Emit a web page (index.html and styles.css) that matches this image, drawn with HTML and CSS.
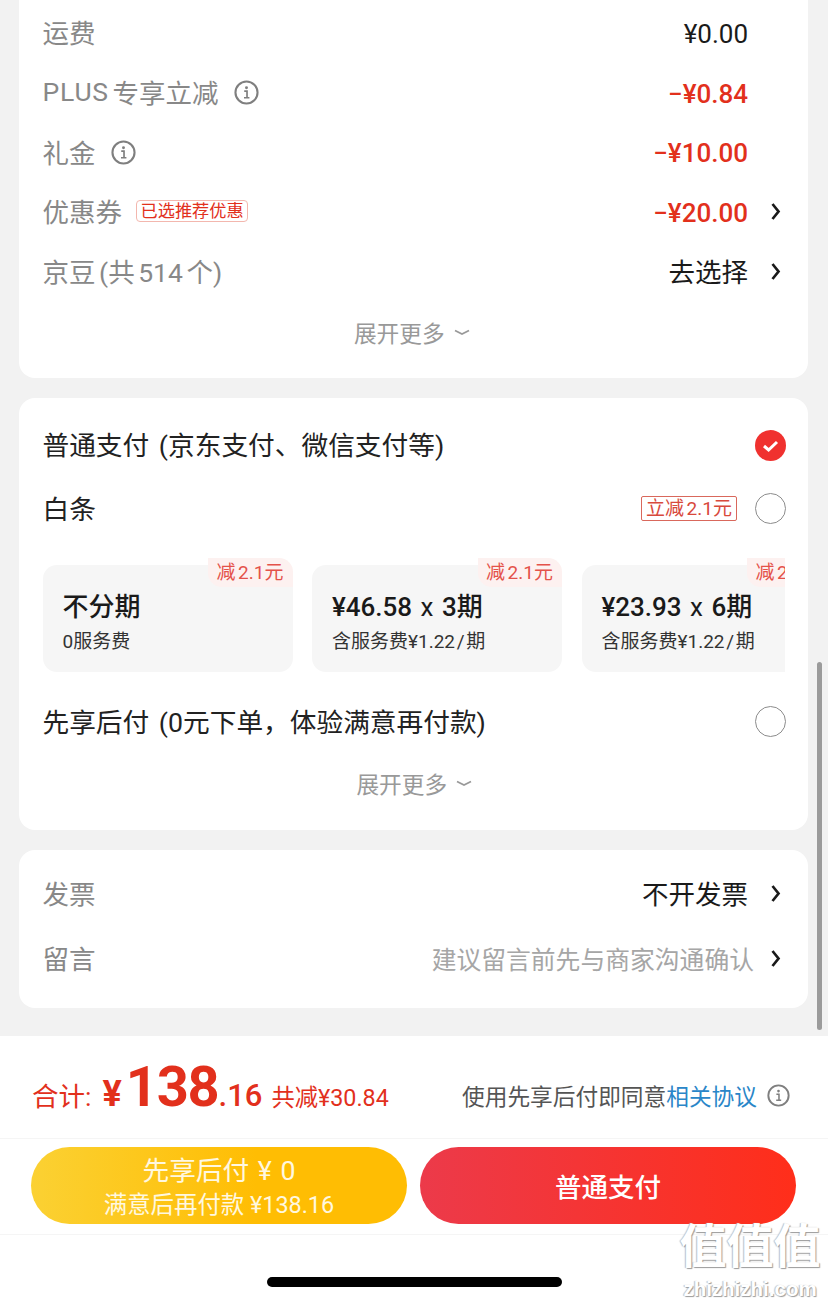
FILE: index.html
```html
<!DOCTYPE html>
<html>
    <head>
        <title>确认订单</title>
        <meta charset="UTF-8"/>
        <meta name="viewport" content="width=device-width, initial-scale=1.0"/>
        <link rel="stylesheet" href="styles.css">
    </head>
    <body>
        <svg class="defs" width="0" height="0">
            <symbol id="info" viewBox="0 0 24 24">
                <circle cx="12" cy="12" r="10.6" fill="none" stroke="currentColor" stroke-width="2"/>
                <circle cx="12" cy="7.4" r="1.4" fill="currentColor"/>
                <path d="M9.8 10.6h2.7v6.2M9.6 17h5.2" fill="none" stroke="currentColor" stroke-width="1.6"/>
            </symbol>
            <symbol id="arrow" viewBox="0 0 11 19">
                <path d="M2.5 2l6 7.5-6 7.5" fill="none" stroke="currentColor" stroke-width="2.7"/>
            </symbol>
            <symbol id="fold" viewBox="0 0 16 7">
                <path d="M1 1.5l7 3.5 7-3.5" fill="none" stroke="currentColor" stroke-width="1.8"/>
            </symbol>
        </svg>

        <div class="page">
            <!-- 金额明细 -->
            <section class="card card-price">
                <div class="row">
                    <div class="label">运费</div>
                    <div class="value num">¥0.00</div>
                    <span class="arrow-slot"></span>
                </div>
                <div class="row">
                    <div class="label"><span class="latin">PLUS</span> 专享立减<svg class="info"><use href="#info"/></svg></div>
                    <div class="value num red">−¥0.84</div>
                    <span class="arrow-slot"></span>
                </div>
                <div class="row">
                    <div class="label">礼金<svg class="info"><use href="#info"/></svg></div>
                    <div class="value num red">−¥10.00</div>
                    <span class="arrow-slot"></span>
                </div>
                <div class="row">
                    <div class="label">优惠券<span class="coupon-tag">已选推荐优惠</span></div>
                    <div class="value num red">−¥20.00</div>
                    <span class="arrow-slot"><svg class="arrow"><use href="#arrow"/></svg></span>
                </div>
                <div class="row">
                    <div class="label">京豆 (共 514 个)</div>
                    <div class="value">去选择</div>
                    <span class="arrow-slot"><svg class="arrow"><use href="#arrow"/></svg></span>
                </div>
                <div class="more">展开更多<svg class="fold"><use href="#fold"/></svg></div>
            </section>

            <!-- 支付方式 -->
            <section class="card card-pay">
                <div class="pay-row">
                    <div class="pay-name">普通支付 (京东支付、微信支付等)</div>
                    <svg class="check" viewBox="0 0 31 31">
                        <circle cx="15.5" cy="15.5" r="15.5" fill="#f0312f"/>
                        <path d="M9 16l4.6 4 8.4-8" fill="none" stroke="#fff" stroke-width="3"/>
                    </svg>
                </div>
                <div class="pay-row baitiao">
                    <div class="pay-name">白条</div>
                    <span class="cut-tag">立减 2.1元</span>
                    <span class="radio"></span>
                </div>
                <div class="plans">
                    <div class="plan">
                        <span class="plan-badge">减 2.1元</span>
                        <div class="plan-title">不分期</div>
                        <div class="plan-sub">0服务费</div>
                    </div>
                    <div class="plan">
                        <span class="plan-badge">减 2.1元</span>
                        <div class="plan-title">¥46.58 <i>x</i> 3期</div>
                        <div class="plan-sub">含服务费¥1.22 / 期</div>
                    </div>
                    <div class="plan">
                        <span class="plan-badge">减 2.1元</span>
                        <div class="plan-title">¥23.93 <i>x</i> 6期</div>
                        <div class="plan-sub">含服务费¥1.22 / 期</div>
                    </div>
                </div>
                <div class="pay-row later">
                    <div class="pay-name">先享后付 (0元下单，体验满意再付款)</div>
                    <span class="radio"></span>
                </div>
                <div class="more">展开更多<svg class="fold"><use href="#fold"/></svg></div>
            </section>

            <!-- 发票和留言 -->
            <section class="card card-extra">
                <div class="row">
                    <div class="label">发票</div>
                    <div class="value">不开发票</div>
                    <span class="arrow-slot"><svg class="arrow"><use href="#arrow"/></svg></span>
                </div>
                <div class="row">
                    <div class="label">留言</div>
                    <div class="value hint">建议留言前先与商家沟通确认</div>
                    <span class="arrow-slot short"><svg class="arrow"><use href="#arrow"/></svg></span>
                </div>
            </section>

            <!-- 底部结算 -->
            <footer class="bar">
                <div class="sum">
                    <div class="total">
                        <span class="total-label">合计:</span>
                        <span class="yen">¥</span><span class="big">138</span><span class="cents">.16</span>
                        <span class="saved">共减¥30.84</span>
                    </div>
                    <div class="agree">使用先享后付即同意<a class="link">相关协议</a><svg class="info"><use href="#info"/></svg></div>
                </div>
                <div class="buttons">
                    <button class="btn btn-later">
                        <span class="btn-top">先享后付 ¥ 0</span>
                        <span class="btn-bottom">满意后再付款 ¥138.16</span>
                    </button>
                    <button class="btn btn-pay">普通支付</button>
                </div>
                <div class="home-area"><span class="home"></span></div>
            </footer>
        </div>

        <div class="scrollbar"></div>
        <div class="mark">
            <div class="mark-big">值值值</div>
            <div class="mark-small">zhizhizhi.com</div>
        </div>
    </body>
</html>
```

FILE: styles.css
```css
html, body {
    margin: 0;
    padding: 0;
}

body {
    position: relative;
    height: 1303px;
    overflow: hidden;
    background: #f2f2f2;
    font-family: Roboto, "Noto Sans CJK SC", sans-serif;
    color: #1a1a1a;
}

.defs {
    position: absolute;
}

.page {
    display: flex;
    flex-direction: column;
    height: 1303px;
}

.card {
    flex: none;
    margin: 0 20px 20px 19px;
    background: #fff;
    border-radius: 16px;
}

.card-price {
    height: 378px;
    padding: 3px 27px 0 23.5px;
    box-sizing: border-box;
    border-radius: 0 0 16px 16px;
}

.card-pay {
    height: 432px;
    padding: 15px 22px 0 23.5px;
    box-sizing: border-box;
}

.card-extra {
    height: 158px;
    padding: 11px 27px 0 23.5px;
    box-sizing: border-box;
    margin-bottom: 28px;
}

/* 明细行 */
.row {
    display: flex;
    align-items: center;
    height: 59.7px;
}

.card-extra .row {
    height: 65px;
}

.label {
    flex: 1;
    display: flex;
    align-items: center;
    padding-bottom: 2px;
    font-size: 26.5px;
    word-spacing: -3px;
    white-space: pre;
    color: #888;
}

.latin {
    letter-spacing: 0.8px;
}

.value {
    padding-bottom: 2px;
    font-size: 26.5px;
    color: #1a1a1a;
    white-space: nowrap;
}

.value.num {
    padding: 2px 0 0;
    font-size: 26px;
}

.value.red {
    color: #e2301c;
    font-weight: 500;
}

.value.hint {
    font-size: 24.8px;
    color: #a6a6a6;
}

.arrow-slot {
    flex: none;
    width: 33px;
    display: flex;
    justify-content: flex-end;
}

.arrow-slot.short {
    width: 27px;
}

.arrow {
    width: 11px;
    height: 19px;
    color: #1a1a1a;
}

.info {
    width: 25px;
    height: 25px;
    margin: 2px 0 0 15px;
    color: #7f7f7f;
}

.coupon-tag {
    margin-left: 14px;
    padding: 0 3.5px;
    height: 22px;
    line-height: 21px;
    box-sizing: border-box;
    border: 1px solid #f3b7ae;
    border-radius: 4px;
    font-size: 17.2px;
    color: #e2301c;
}

.more {
    display: flex;
    align-items: center;
    justify-content: center;
    gap: 9px;
    height: 34px;
    margin-top: 14px;
    font-size: 22.7px;
    color: #999;
}

.fold {
    width: 16px;
    height: 7px;
    color: #999;
}

/* 支付方式 */
.pay-row {
    display: flex;
    align-items: center;
    height: 64px;
}

.pay-name {
    flex: 1;
    padding-bottom: 3px;
    font-size: 26.7px;
    word-spacing: 3px;
    white-space: nowrap;
    color: #222;
}

.check {
    width: 31px;
    height: 31px;
}

.radio {
    width: 31px;
    height: 31px;
    margin-top: -1px;
    box-sizing: border-box;
    border: 1px solid #8c8c8c;
    border-radius: 50%;
}

.cut-tag {
    height: 25px;
    line-height: 23px;
    box-sizing: border-box;
    margin: 0 18px 1px 0;
    padding: 0 4px;
    border: 1px solid #d9685c;
    border-radius: 2px;
    font-size: 19px;
    word-spacing: -2px;
    color: #d8493c;
    white-space: nowrap;
}

.plans {
    display: flex;
    gap: 19.5px;
    height: 115px;
    padding-top: 8px;
    margin: 16px 1px 0 0;
    box-sizing: border-box;
    overflow: hidden;
}

.plan {
    position: relative;
    flex: none;
    width: 250px;
    height: 107px;
    box-sizing: border-box;
    padding: 26px 0 0 20px;
    background: #f6f6f6;
    border-radius: 14px;
}

.plan-badge {
    position: absolute;
    top: -7px;
    right: 0;
    padding: 3px 9px 3px 8px;
    line-height: 23px;
    font-size: 19px;
    word-spacing: -2px;
    color: #e4524a;
    white-space: nowrap;
    background: #fdf1f0;
    border-radius: 0 14px 0 14px;
}

.plan-title {
    font-size: 26px;
    line-height: 32px;
    font-weight: 500;
    color: #1a1a1a;
    white-space: nowrap;
}

.plan-title i {
    font-style: normal;
    font-weight: 400;
    margin: 0 2px;
}

.plan-sub {
    margin-top: 5px;
    font-size: 19px;
    word-spacing: -3px;
    line-height: 28px;
    color: #333;
    white-space: nowrap;
}

.later {
    height: 74px;
    margin-top: 13px;
}

.later + .more {
    margin-top: 7px;
}

/* 底部结算 */
.bar {
    flex: 1;
    background: #fff;
}

.sum {
    display: flex;
    align-items: flex-end;
    justify-content: space-between;
    height: 103px;
    box-sizing: border-box;
    padding: 0 38px 23px 32px;
    border-bottom: 1px solid #f5f5f5;
}

.total {
    display: flex;
    align-items: baseline;
    color: #e2301c;
    white-space: nowrap;
}

.total-label {
    font-size: 26.5px;
    margin-right: 11px;
}

.yen {
    font-size: 36px;
    font-weight: 700;
    margin-right: 4px;
}

.big {
    font-size: 56px;
    line-height: 50px;
    letter-spacing: -1.2px;
    font-weight: 700;
}

.cents {
    font-size: 31px;
    font-weight: 500;
}

.saved {
    margin-left: 9px;
    font-size: 23.3px;
}

.agree {
    display: flex;
    align-items: center;
    margin-bottom: 3px;
    font-size: 22.7px;
    color: #555;
    white-space: nowrap;
}

.agree .info {
    width: 23px;
    height: 23px;
    margin: 0 0 0 10px;
}

.link {
    color: #2a86c8;
}

.buttons {
    display: flex;
    justify-content: space-between;
    height: 96px;
    box-sizing: border-box;
    padding: 8px 32px 0 31px;
    border-bottom: 1px solid #f5f5f5;
}

.btn {
    display: flex;
    flex-direction: column;
    align-items: center;
    justify-content: center;
    width: 376px;
    height: 77px;
    padding: 4px 0 0;
    border: 0;
    border-radius: 39px;
    color: #fff;
    font-family: inherit;
}

.btn-later {
    background: linear-gradient(90deg, #fbd133, #ffbd03 60%);
    color: #fff8e0;
}

.btn-top {
    font-size: 26.7px;
    word-spacing: 2px;
    line-height: 35px;
}

.btn-bottom {
    font-size: 23.4px;
    line-height: 32px;
}

.btn-pay {
    padding: 0;
    background: linear-gradient(90deg, #ec3a4a, #ff2e1a);
    font-size: 26.5px;
    font-weight: 500;
}

.home-area {
    display: flex;
    justify-content: center;
    padding-top: 42px;
}

.home {
    display: block;
    width: 295px;
    height: 10px;
    background: #000;
    border-radius: 5px;
}

/* 滚动条和角标水印盖在内容上面 */
.scrollbar {
    position: absolute;
    left: 817px;
    top: 662px;
    width: 5px;
    height: 368px;
    background: #9b9b9b;
    border-radius: 3px;
}

.mark {
    position: absolute;
    left: 678px;
    top: 1218px;
    width: 144px;
    text-align: center;
    color: #fff;
    text-shadow: 1px 1px 1px #9a9a9a, -1px 0 1px #bdbdbd;
}

.mark-big {
    font-size: 47px;
    line-height: 58px;
    font-weight: 700;
}

.mark-small {
    font-size: 20.5px;
    line-height: 26px;
    font-weight: 700;
    font-family: "Liberation Sans", sans-serif;
}
```
